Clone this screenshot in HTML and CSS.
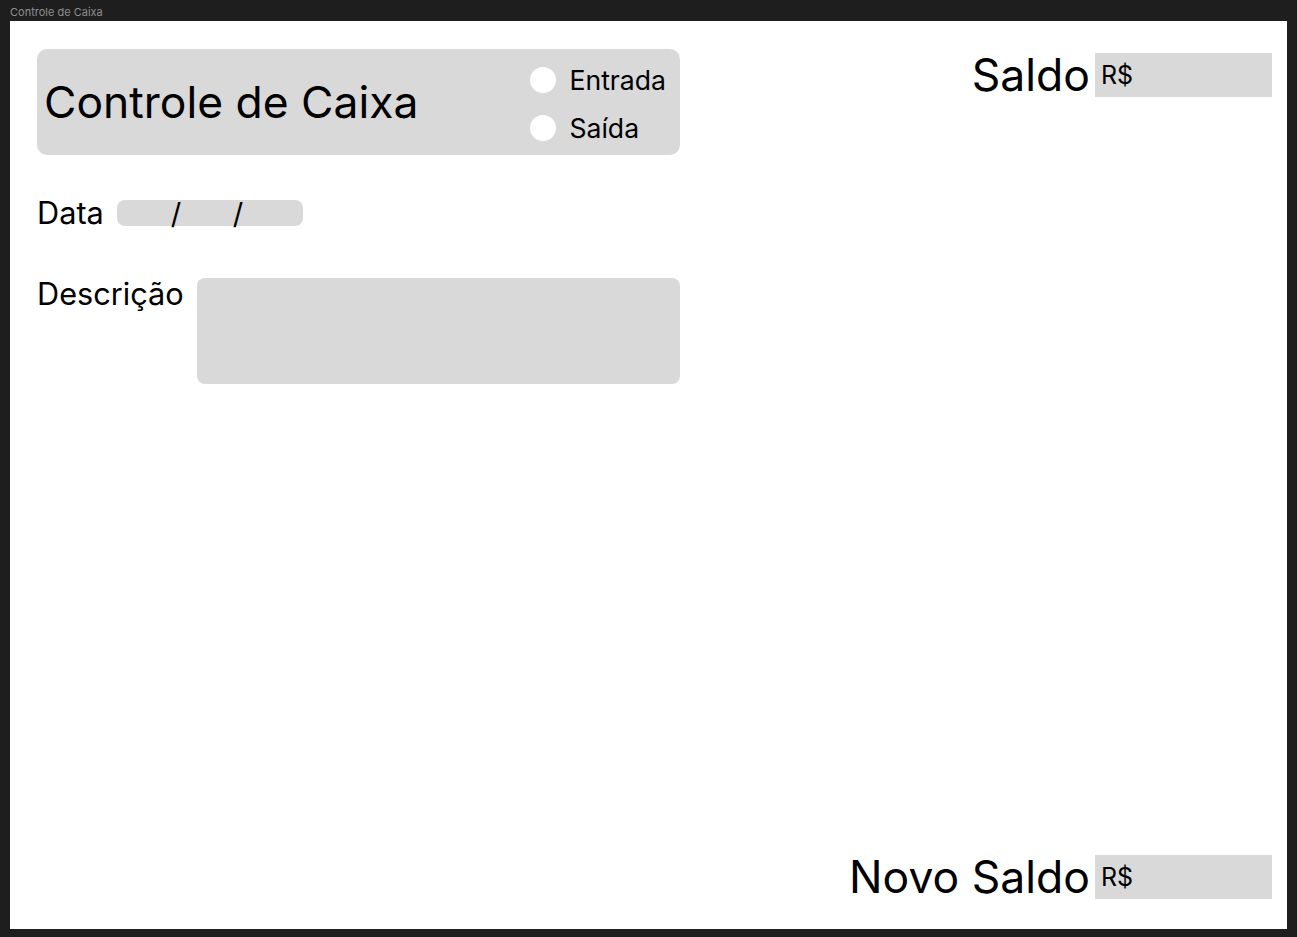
FILE: index.html
```html
<!DOCTYPE html>
<html lang="pt">
<head>
<meta charset="utf-8">
<title>Controle de Caixa</title>
<link rel="stylesheet" href="styles.css">
</head>
<body>
<div class="frame-label">Controle de Caixa</div>
<main class="frame">
  <div class="top-row">
    <section class="left-col">
      <header class="header-panel">
        <h1 class="title">Controle de Caixa</h1>
        <div class="radios">
          <label class="radio"><span class="dot"></span>Entrada</label>
          <label class="radio"><span class="dot"></span>Saída</label>
        </div>
      </header>
      <div class="date-row">
        <span class="field-label">Data</span>
        <div class="date-box"><span class="slash s1">/</span><span class="slash s2">/</span></div>
      </div>
      <div class="desc-row">
        <span class="field-label">Descrição</span>
        <div class="desc-box"></div>
      </div>
    </section>
    <div class="balance saldo">
      <span class="balance-label">Saldo</span>
      <div class="money-box">R$</div>
    </div>
  </div>
  <div class="bottom-row">
    <div class="balance">
      <span class="balance-label">Novo Saldo</span>
      <div class="money-box">R$</div>
    </div>
  </div>
</main>
</body>
</html>
```
FILE: styles.css
```css
* { box-sizing: border-box; }
html, body {
  margin: 0;
  padding: 0;
  background: #1e1e1e;
  font-family: Inter, "Noto Sans", "Liberation Sans", sans-serif;
  color: #000;
}
.frame-label {
  height: 21px;
  padding: 6px 0 0 10px;
  font-size: 11px;
  line-height: 13px;
  color: #8f8f8f;
}
.frame {
  margin-left: 10px;
  width: 1277px;
  height: 908px;
  background: #fff;
  padding: 28px 15px 30px 27px;
  display: flex;
  flex-direction: column;
  justify-content: space-between;
}
.top-row {
  display: flex;
  justify-content: space-between;
  align-items: flex-start;
}
.left-col {
  width: 643px;
  display: flex;
  flex-direction: column;
}
.header-panel {
  height: 106px;
  background: #d9d9d9;
  border-radius: 10px;
  display: flex;
  align-items: center;
  justify-content: space-between;
  padding: 0 14px 0 7px;
}
.title {
  margin: 0;
  font-size: 44.4px;
  font-weight: 400;
  line-height: 1;
  letter-spacing: 0;
}
.radios {
  display: flex;
  flex-direction: column;
  gap: 22px;
  padding-top: 4px;
}
.radio {
  display: flex;
  align-items: center;
  gap: 13px;
  font-size: 26.6px;
  line-height: 26px;
}
.dot {
  width: 26px;
  height: 26px;
  border-radius: 50%;
  background: #fff;
}
.date-row {
  margin-top: 44px;
  display: flex;
  align-items: center;
  gap: 13px;
}
.field-label {
  font-size: 30.7px;
  line-height: 28px;
}
.date-box {
  position: relative;
  width: 186px;
  height: 26px;
  background: #d9d9d9;
  border-radius: 8px;
}
.slash {
  position: absolute;
  top: -1px;
  font-size: 29px;
  line-height: 30px;
}
.s1 { left: 54px; }
.s2 { left: 116px; }
.desc-row {
  margin-top: 51px;
  display: flex;
  align-items: flex-start;
  justify-content: space-between;
}
.desc-row .field-label { margin-top: 2px; }
.desc-box {
  width: 483px;
  height: 106px;
  background: #d9d9d9;
  border-radius: 8px;
}
.balance {
  display: flex;
  align-items: center;
  gap: 5px;
}
.saldo { margin-top: 4px; }
.bottom-row {
  display: flex;
  justify-content: flex-end;
}
.balance-label {
  font-size: 44.5px;
  line-height: 44px;
}
.money-box {
  width: 177px;
  height: 44px;
  background: #d9d9d9;
  padding-left: 6px;
  display: flex;
  align-items: center;
  font-size: 25px;
}
```
